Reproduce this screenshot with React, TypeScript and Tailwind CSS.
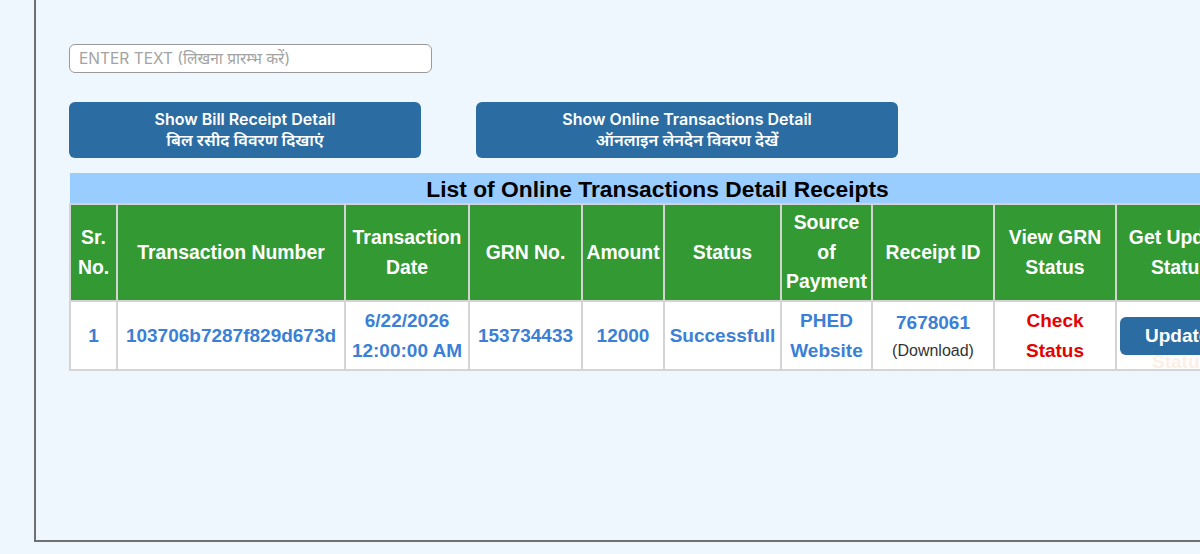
const headers: { lines: string[]; w: string }[] = [
  { lines: ['Sr.', 'No.'], w: 'w-[47px]' },
  { lines: ['Transaction Number'], w: 'w-[228px]' },
  { lines: ['Transaction', 'Date'], w: 'w-[124px]' },
  { lines: ['GRN No.'], w: 'w-[113px]' },
  { lines: ['Amount'], w: 'w-[82px]' },
  { lines: ['Status'], w: 'w-[117px]' },
  { lines: ['Source', 'of', 'Payment'], w: 'w-[91px]' },
  { lines: ['Receipt ID'], w: 'w-[122px]' },
  { lines: ['View GRN', 'Status'], w: 'w-[122px]' },
  { lines: ['Get Update', 'Status'], w: 'w-[129px]' },
];

const cell = 'border-2 border-[#d4d4d4] text-center align-middle p-0';

export default function App() {
  return (
    <div className="h-[554px] w-[1200px] overflow-hidden bg-[#eef6fe] font-['Liberation_Sans',Arial,sans-serif]">
      <div className="ml-[34px] h-[542px] w-[1300px] border-l-2 border-b-2 border-[#707070] bg-[#eef6fe] pl-[33px] pt-[44px]">
        <input
          type="text"
          placeholder="ENTER TEXT (लिखना प्रारम्भ करें)"
          className="block h-[29px] w-[363px] rounded-[6px] border-[1.5px] border-[#9a9a9a] bg-white px-[9px] font-['Inter','Noto_Sans',sans-serif] text-[15.5px] text-[#333] placeholder:text-[#a3a3a3] outline-none"
        />

        <div className="mt-[29px] flex">
          <button className="flex h-[56px] w-[352px] flex-col items-center justify-center rounded-[6px] bg-[#2b6da3] font-['Inter','Noto_Sans',sans-serif] text-[16px] font-semibold leading-[21px] text-white">
            <span>Show Bill Receipt Detail</span>
            <span className="text-[16.5px]">बिल रसीद विवरण दिखाएं</span>
          </button>
          <button className="ml-[55px] flex h-[56px] w-[422px] flex-col items-center justify-center rounded-[6px] bg-[#2b6da3] font-['Inter','Noto_Sans',sans-serif] text-[16px] font-semibold leading-[21px] text-white">
            <span>Show Online Transactions Detail</span>
            <span className="text-[16.5px]">ऑनलाइन लेनदेन विवरण देखें</span>
          </button>
        </div>

        <table className="mt-[15px] w-[1175px] table-fixed border-collapse">
          <colgroup>
            {headers.map((h, i) => (
              <col key={i} className={h.w} />
            ))}
          </colgroup>
          <thead>
            <tr>
              <th
                colSpan={10}
                className="h-[31px] border-x-0 border-t-0 border-b-2 border-[#d4d4d4] bg-[#99ccff] pt-[1px] text-center text-[22.8px] font-bold leading-[26px] text-black"
              >
                List of Online Transactions Detail Receipts
              </th>
            </tr>
            <tr className="h-[97px] bg-[#339933]">
              {headers.map((h, i) => (
                <th key={i} className={`${cell} whitespace-nowrap text-[19.4px] font-bold leading-[29.5px] text-white`}>
                  {h.lines.map((l) => (
                    <div key={l}>{l}</div>
                  ))}
                </th>
              ))}
            </tr>
          </thead>
          <tbody>
            <tr className="h-[69px] bg-white text-[19px] font-bold leading-[30px] text-[#3b7fd6]">
              <td className={cell}>1</td>
              <td className={cell}>103706b7287f829d673d</td>
              <td className={cell}>
                <div>6/22/2026</div>
                <div>12:00:00 AM</div>
              </td>
              <td className={cell}>153734433</td>
              <td className={cell}>12000</td>
              <td className={cell}>Successfull</td>
              <td className={cell}>
                <div>PHED</div>
                <div>Website</div>
              </td>
              <td className={cell}>
                <div>7678061</div>
                <div className="text-[16px] font-normal leading-[26px] text-[#333]">(Download)</div>
              </td>
              <td className={`${cell} text-[#e60000]`}>
                <div>Check</div>
                <div>Status</div>
              </td>
              <td className={`${cell} text-left`}>
                <div className="relative ml-[3px] h-[38px] overflow-visible">
                  <button className="h-[38px] w-[140px] overflow-hidden whitespace-nowrap rounded-[6px] bg-[#2b6da3] pl-[25px] text-left text-[19px] font-bold text-white">
                    Update
                  </button>
                  <span className="absolute left-[32px] top-[34px] text-[19px] font-bold leading-[22px] text-[#fcefe6]">
                    Status
                  </span>
                </div>
              </td>
            </tr>
          </tbody>
        </table>
      </div>
    </div>
  );
}
